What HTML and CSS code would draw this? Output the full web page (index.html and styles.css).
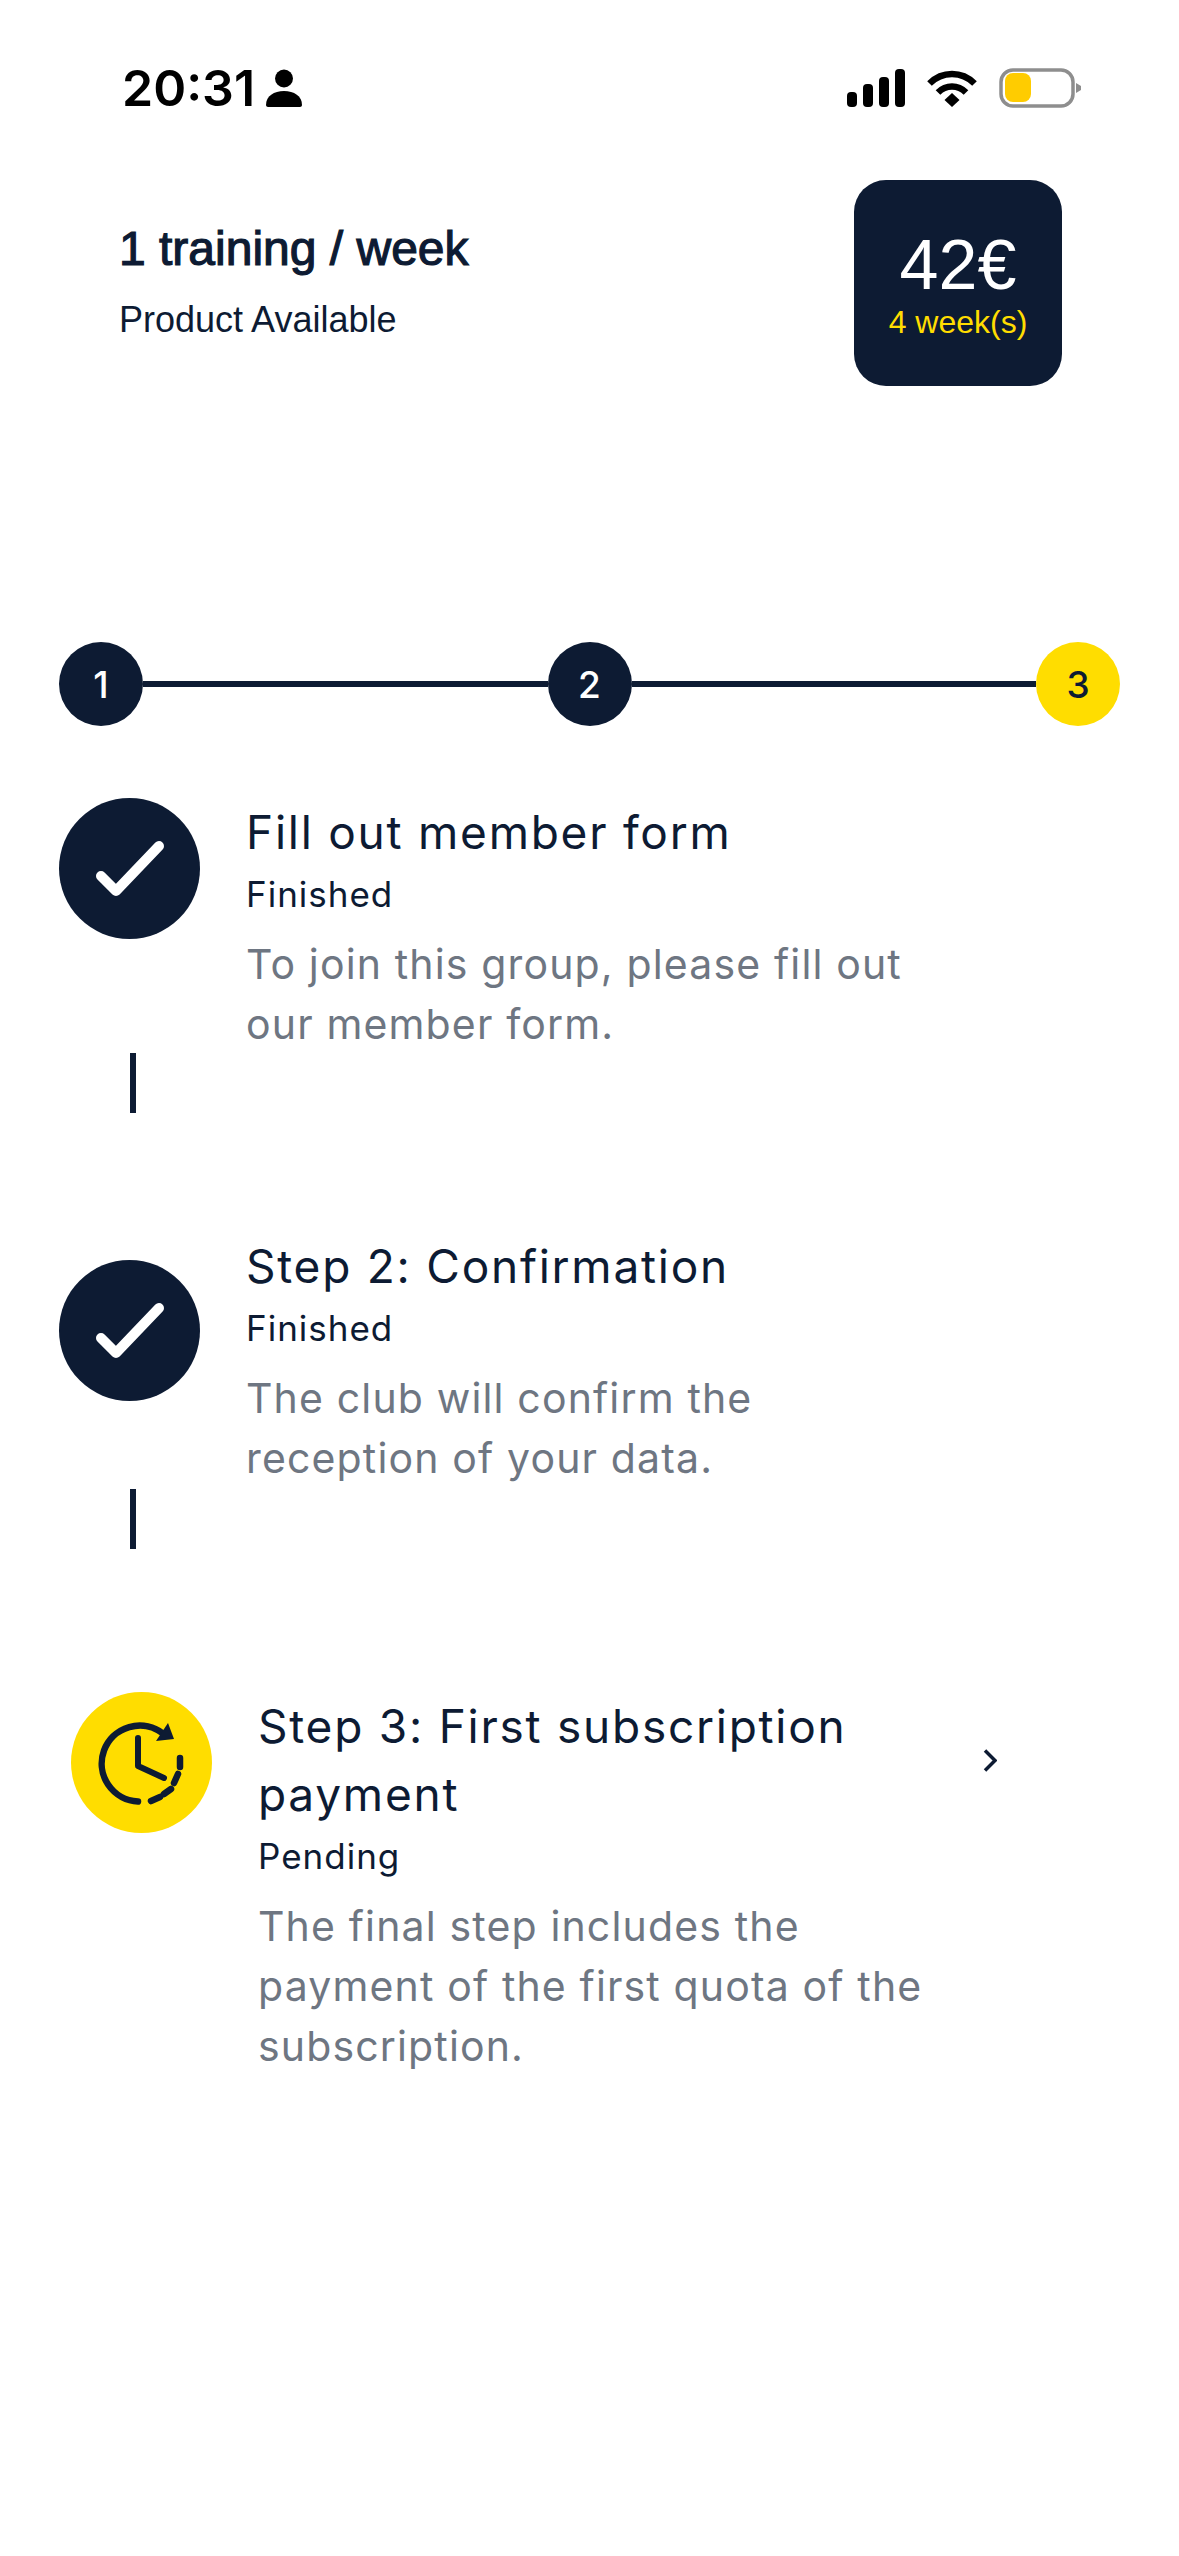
FILE: index.html
```html
<!DOCTYPE html>
<html lang="en">
<head>
  <meta charset="UTF-8" />
  <meta name="viewport" content="width=device-width, initial-scale=1.0"/>
  <title>1 training / week</title>
  <link rel="stylesheet" href="styles.css">
</head>
<body>

<header class="status-bar">
  <div class="status-left">
    <span class="clock">20:31</span>
    <svg class="person" viewBox="0 0 36 38" width="36" height="38">
      <circle cx="18" cy="9.5" r="9" fill="#000"/>
      <path d="M0 36c0-9 8-14 18-14s18 5 18 14c0 1-1 2-2 2H2c-1 0-2-1-2-2z" fill="#000"/>
    </svg>
  </div>
  <div class="status-right">
    <svg viewBox="0 0 58 38" width="58" height="38">
      <rect x="0" y="23" width="10" height="15" rx="4" fill="#000"/>
      <rect x="16" y="15" width="10" height="23" rx="4" fill="#000"/>
      <rect x="32" y="8" width="10" height="30" rx="4" fill="#000"/>
      <rect x="48" y="0" width="10" height="38" rx="4" fill="#000"/>
    </svg>
    <svg viewBox="0 0 50 38" width="50" height="38">
      <path d="M2.5 14.5C8.5 8.500 16 5 25 5s16.500 3.500 22.500 9.500" fill="none" stroke="#000" stroke-width="6.500"/>
      <path d="M11 23.500c3.800-3.800 8.500-6 14-6s10.200 2.200 14 6" fill="none" stroke="#000" stroke-width="6.500"/>
      <path d="M17.500 31L25 24l7.500 7L25 38z" fill="#000"/>
    </svg>
    <svg viewBox="0 0 82 40" width="82" height="40">
      <rect x="2" y="2" width="72" height="36" rx="12" fill="none" stroke="#8e8e8e" stroke-width="3.500"/>
      <rect x="6" y="5" width="26" height="29" rx="8" fill="#ffcc00"/>
      <path d="M77 15l5 3v4l-5 3z" fill="#8e8e8e"/>
    </svg>
  </div>
</header>

<main>
  <section class="product">
    <div class="product-text">
      <h1>1 training / week</h1>
      <p>Product Available</p>
    </div>
    <div class="price-card">
      <div class="price">42€</div>
      <div class="period">4 week(s)</div>
    </div>
  </section>

  <div class="stepper">
    <div class="dot">1</div>
    <div class="bar"></div>
    <div class="dot">2</div>
    <div class="bar"></div>
    <div class="dot dot-active">3</div>
  </div>

  <section class="step step-one">
    <div class="step-side">
      <div class="step-icon">
        <svg viewBox="0 0 141 141" width="141" height="141">
          <path d="M42 78l15 15 43-45" fill="none" stroke="#fff" stroke-width="10" stroke-linecap="round" stroke-linejoin="round"/>
        </svg>
      </div>
      <div class="connector"></div>
    </div>
    <div class="step-body">
      <h2>Fill out member form</h2>
      <div class="step-state">Finished</div>
      <p>To join this group, please fill out our member form.</p>
    </div>
  </section>

  <section class="step step-two">
    <div class="step-side">
      <div class="step-icon">
        <svg viewBox="0 0 141 141" width="141" height="141">
          <path d="M42 78l15 15 43-45" fill="none" stroke="#fff" stroke-width="10" stroke-linecap="round" stroke-linejoin="round"/>
        </svg>
      </div>
      <div class="connector"></div>
    </div>
    <div class="step-body">
      <h2>Step 2: Confirmation</h2>
      <div class="step-state">Finished</div>
      <p>The club will confirm the reception of your data.</p>
    </div>
  </section>

  <section class="step step-three">
    <div class="step-side">
      <div class="step-icon step-icon-pending">
        <svg viewBox="0 0 141 141" width="141" height="141" fill="none" stroke="#0d1b33" stroke-linecap="round">
          <path d="M67 109.500A38 38 0 1 1 92 41.500" stroke-width="6.500"/>
          <path d="M97 31l6 16-18 2z" fill="#0d1b33" stroke="none"/>
          <path d="M67 46v28l26 12" stroke-width="6" stroke-linejoin="round"/>
          <path d="M80 109l9-4M93 102l7-5M103 91l4-9M109 75v-9" stroke-width="6.500"/>
        </svg>
      </div>
    </div>
    <div class="step-body">
      <h2>Step 3: First subscription payment</h2>
      <div class="step-state">Pending</div>
      <p>The final step includes the payment of the first quota of the subscription.</p>
    </div>
    <svg class="chevron" viewBox="0 0 14 23" width="14" height="23">
      <path d="M2 1.500L12 11.500 2 21.500" fill="none" stroke="#0d1b33" stroke-width="3.500"/>
    </svg>
  </section>
</main>

</body>
</html>
```

FILE: styles.css
```css
* {
  box-sizing: border-box;
}

html, body {
  margin: 0;
  height: 100%;
}

body {
  width: 1179px;
  height: 2556px;
  overflow: hidden;
  background: white;
  color: #0d1b33;
  font-family: Inter, "Liberation Sans", sans-serif;
}

.status-bar {
  display: flex;
  justify-content: space-between;
  align-items: center;
  height: 38px;
  margin-top: 69px;
  padding: 0 98px 0 122px;
}

.status-left {
  display: flex;
  align-items: center;
  gap: 11px;
}

.clock {
  font-size: 50px;
  font-weight: 600;
  color: black;
  line-height: 38px;
}

.status-right {
  display: flex;
  align-items: center;
  gap: 22px;
}

.product {
  display: flex;
  justify-content: space-between;
  align-items: center;
  margin-top: 73px;
  padding: 0 117px 0 119px;
  font-family: "Liberation Sans", sans-serif;
}

.product h1 {
  margin: -4px 0 0;
  font-size: 48px;
  font-weight: 400;
  -webkit-text-stroke: 1.2px #0d1b33;
  line-height: 56px;
}

.product p {
  margin: 21px 0 0;
  font-size: 36px;
  line-height: 44px;
}

.price-card {
  width: 208px;
  height: 206px;
  background: #0d1b33;
  border-radius: 32px;
  display: flex;
  flex-direction: column;
  align-items: center;
  justify-content: center;
}

.price {
  color: white;
  font-size: 70px;
  line-height: 72px;
  margin-top: 2px;
}

.period {
  color: #ffdd00;
  font-size: 32px;
  line-height: 36px;
  margin-top: 3px;
}

.stepper {
  display: flex;
  align-items: center;
  margin-top: 256px;
  padding: 0 59px;
}

.dot {
  width: 84px;
  height: 84px;
  flex: none;
  border-radius: 50%;
  background: #0d1b33;
  color: white;
  font-size: 37px;
  font-weight: 500;
  display: flex;
  align-items: center;
  justify-content: center;
}

.dot-active {
  background: #ffdd00;
  color: #0d1b33;
}

.bar {
  flex: 1;
  height: 6px;
  background: #0d1b33;
}

.step {
  display: flex;
  align-items: flex-start;
  padding-left: 59px;
}

.step-one {
  margin-top: 72px;
}

.step-two {
  margin-top: 147px;
}

.step-three {
  margin-top: 143px;
  padding-left: 71px;
}

.step-side {
  flex: none;
  width: 141px;
  margin-right: 46px;
}

.step-icon {
  width: 141px;
  height: 141px;
  border-radius: 50%;
  background: #0d1b33;
}

.step-icon svg {
  display: block;
}

.step-icon-pending {
  background: #ffdd00;
}

.connector {
  width: 6px;
  height: 60px;
  margin: 114px 0 0 71px;
  background: #0d1b33;
}

.step-two .connector {
  margin-top: 88px;
}

.step-body {
  width: 680px;
}

.step-two .step-body {
  margin-top: -28px;
}

.step-body h2 {
  margin: 0;
  font-size: 46px;
  font-weight: 400;
  letter-spacing: 1.75px;
  line-height: 68px;
}

.step-state {
  font-size: 35px;
  letter-spacing: 1px;
  line-height: 50px;
  margin-top: 3px;
}

.step-body p {
  margin: 15px 0 0;
  font-size: 41px;
  letter-spacing: 1.15px;
  line-height: 60px;
  color: #6e7682;
}

.chevron {
  flex: none;
  margin: 57px 0 0 45px;
}
```
